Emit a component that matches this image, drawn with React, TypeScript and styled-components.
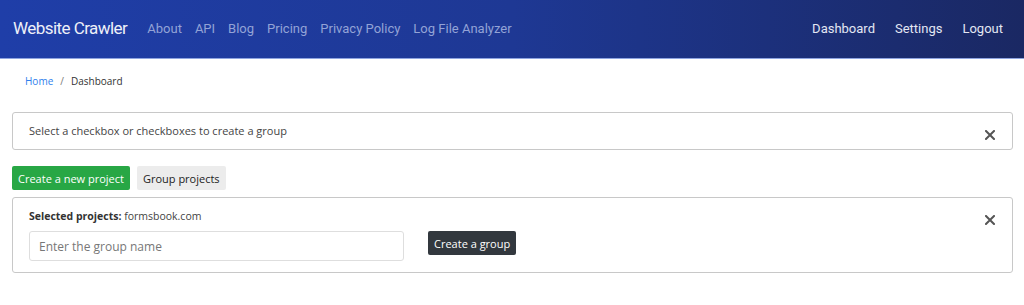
import React from "react";
import styled, { createGlobalStyle } from "styled-components";

const Global = createGlobalStyle`
  html, body { margin: 0; padding: 0; background: #fff; }
  body { font-family: "Open Sans", "Noto Sans", sans-serif; color: #333; }
  * { box-sizing: border-box; }
`;

const Header = styled.header`
  height: 59px;
  display: flex;
  align-items: center;
  justify-content: space-between;
  padding: 0 21px 2px 13px;
  background: linear-gradient(90deg, #1f3ea8 0%, #1e3894 50%, #1a2863 100%);
  border-bottom: 1px solid #8ea4e0;
`;

const NavLeft = styled.nav`
  display: flex;
  align-items: center;
`;

const Brand = styled.a`
  font-family: Roboto, "Liberation Sans", sans-serif;
  font-size: 17px;
  letter-spacing: -0.55px;
  color: #eef0f8;
  margin-right: 20px;
  text-decoration: none;
`;

const NavLink = styled.a<{ $bright?: boolean }>`
  font-family: Roboto, "Liberation Sans", sans-serif;
  font-size: 13px;
  color: ${(p) => (p.$bright ? "#e3e7f3" : "#93a3d6")};
  text-decoration: none;
  margin-right: ${(p) => (p.$bright ? "20px" : "13px")};
  &:last-child { margin-right: 0; }
`;

const NavRight = styled.nav`
  display: flex;
  align-items: center;
`;

const Main = styled.main`
  padding: 0 11px 0 12px;
`;

const Crumbs = styled.div`
  display: flex;
  align-items: center;
  font-size: 10px;
  height: 44px;
  padding: 0 0 1px 13px;
  color: #333;
`;

const CrumbLink = styled.a`
  color: #2f80ed;
  text-decoration: none;
`;

const Sep = styled.span`
  color: #777;
  margin: 0 7px;
`;

const Alert = styled.div<{ $tall?: boolean }>`
  position: relative;
  border: 1px solid #c8c8c8;
  border-radius: 3px;
  margin-top: ${(p) => (p.$tall ? "7px" : "9px")};
  padding: ${(p) => (p.$tall ? "11px 16px 10px" : "10px 16px")};
  height: ${(p) => (p.$tall ? "76px" : "38px")};
  font-size: 11px;
  line-height: 16px;
  color: #444;
`;

const Close = styled.button<{ $top: number }>`
  position: absolute;
  right: 16px;
  top: ${(p) => p.$top}px;
  width: 12px;
  height: 12px;
  border: 0;
  padding: 0;
  background: none;
  display: flex;
  align-items: center;
  justify-content: center;
`;

const Buttons = styled.div`
  display: flex;
  gap: 7px;
  margin-top: 16px;
`;

const Btn = styled.button<{ $variant: "green" | "light" | "dark" }>`
  font-family: "Open Sans", "Noto Sans", sans-serif;
  font-size: 11px;
  height: 24px;
  padding: 0 6px;
  border-radius: 2px;
  border: 0;
  color: ${(p) => (p.$variant === "light" ? "#222" : "#fff")};
  background: ${(p) =>
    p.$variant === "green" ? "#28a745" : p.$variant === "light" ? "#ececec" : "#32383e"};
`;

const Label = styled.div`
  font-size: 10.5px;
  line-height: 14px;
  color: #444;
  b { font-weight: 700; color: #333; }
`;

const FormRow = styled.div`
  display: flex;
  align-items: flex-start;
  gap: 24px;
  margin-top: 8px;
`;

const Input = styled.input`
  width: 375px;
  height: 30px;
  border: 1px solid #dedede;
  border-radius: 3px;
  padding: 0 9px;
  font-family: "Open Sans", "Noto Sans", sans-serif;
  font-size: 12px;
  &::placeholder { color: #777; }
`;

const X = () => (
  <svg width="10" height="10" viewBox="0 0 10 10">
    <path d="M1 1L9 9M9 1L1 9" stroke="#555" strokeWidth="2" strokeLinecap="square" />
  </svg>
);

export default function App() {
  return (
    <>
      <Global />
      <Header>
        <NavLeft>
          <Brand>Website Crawler</Brand>
          <NavLink>About</NavLink>
          <NavLink>API</NavLink>
          <NavLink>Blog</NavLink>
          <NavLink>Pricing</NavLink>
          <NavLink>Privacy Policy</NavLink>
          <NavLink>Log File Analyzer</NavLink>
        </NavLeft>
        <NavRight>
          <NavLink $bright>Dashboard</NavLink>
          <NavLink $bright>Settings</NavLink>
          <NavLink $bright>Logout</NavLink>
        </NavRight>
      </Header>
      <Main>
        <Crumbs>
          <CrumbLink>Home</CrumbLink>
          <Sep>/</Sep>
          <span>Dashboard</span>
        </Crumbs>
        <Alert>
          Select a checkbox or checkboxes to create a group
          <Close $top={16}><X /></Close>
        </Alert>
        <Buttons>
          <Btn $variant="green">Create a new project</Btn>
          <Btn $variant="light">Group projects</Btn>
        </Buttons>
        <Alert $tall>
          <Label><b>Selected projects:</b> formsbook.com</Label>
          <FormRow>
            <Input placeholder="Enter the group name" />
            <Btn $variant="dark">Create a group</Btn>
          </FormRow>
          <Close $top={16}><X /></Close>
        </Alert>
      </Main>
    </>
  );
}
